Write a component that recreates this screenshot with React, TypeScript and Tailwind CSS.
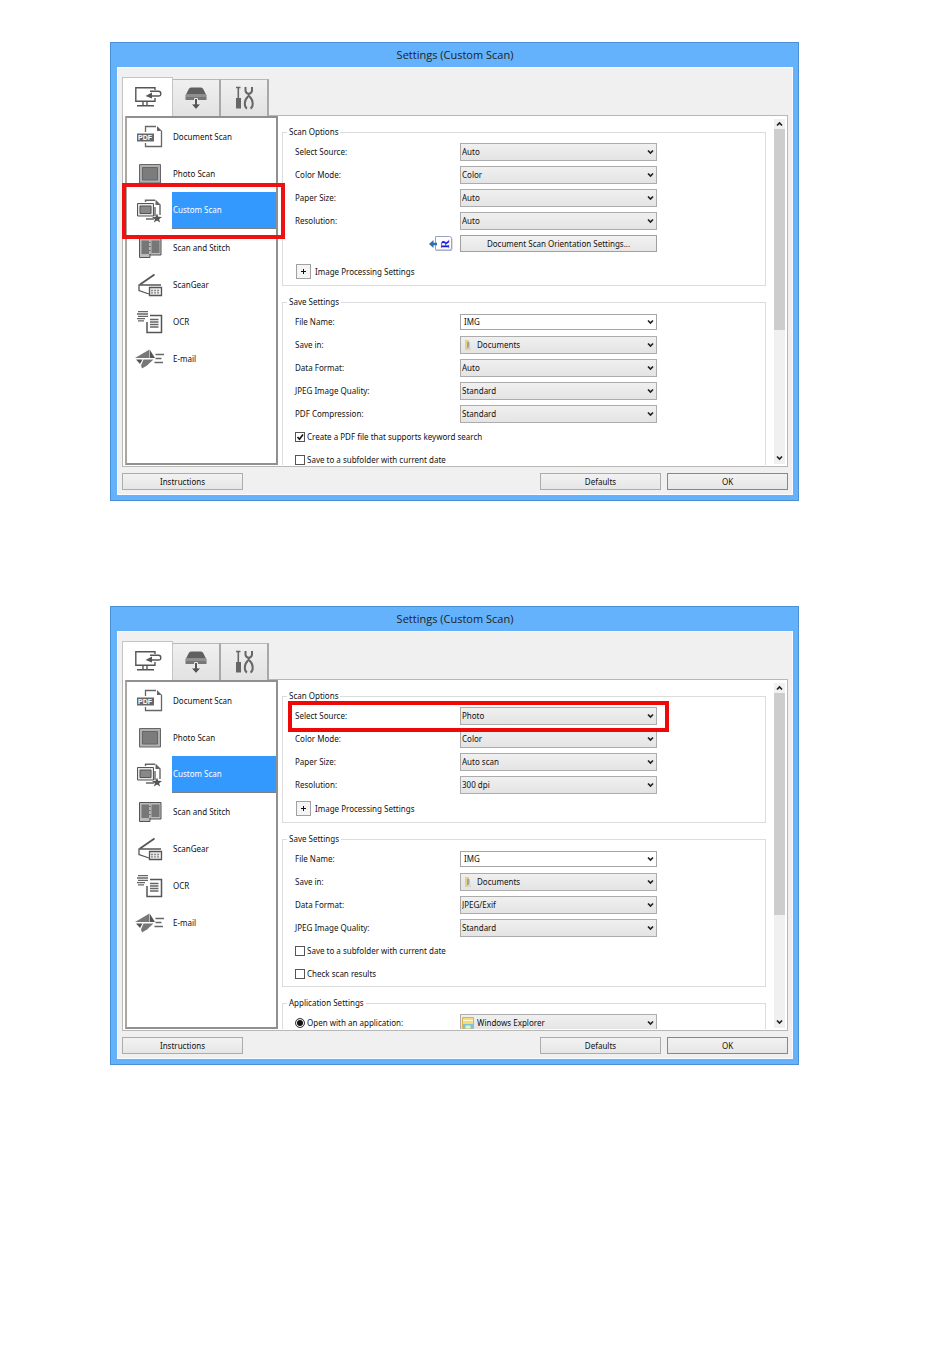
import React from 'react';
import clsx from 'clsx';

interface Option {
  id: string;
  label: string;
  value: string;
  icon?: React.ReactNode;
  editable?: boolean;
  highlighted?: boolean;
}

interface CheckOption {
  id: string;
  label: string;
  checked?: boolean;
}

const ComputerIcon: React.FC = () => (
  <svg width="28" height="22" viewBox="0 0 28 22" fill="none" stroke="#555" strokeWidth="1.4">
    <path d="M21 4V1.700H1.800v13.500H21V12" />
    <path d="M9 15v4M13 15v4M3 19.700h17" />
    <path d="M16 5.300h8.500q2.300 0 2.300 2.400T24.500 10H17" />
    <path d="M18 6.500v6l-6.500-2.500z" fill="#555" stroke="none" />
  </svg>
);

const ScannerIcon: React.FC = () => (
  <svg width="24" height="24" viewBox="0 0 24 24">
    <path d="M7 1.500h10q1.500 0 2.200 1.500L22 8.500H2L4.800 3Q5.500 1.500 7 1.500z" fill="#606060" />
    <path d="M1.500 8.500h21v5.500h-21z" fill="#777" />
    <path d="M2 10h20" stroke="#aaa" strokeWidth="1" />
    <path d="M10.500 12.500h3v5.500h3.500L12 23.500 7 18h3.500z" fill="#555" stroke="#eee" strokeWidth="1" />
  </svg>
);

const ToolsIcon: React.FC = () => (
  <svg width="20" height="24" viewBox="0 0 20 24" fill="none" stroke="#666" strokeWidth="1.6">
    <path d="M2 1.500h4.500M4.300 2v10" />
    <path d="M2 12h5v10.500H2z" fill="#666" stroke="none" />
    <path d="M11.500 1v3.500q0 2.500 3.200 3.500Q18 7 18 4.500V1" strokeWidth="2" />
    <path d="M14.700 8v3M14 10.500q-3.200 3-3.200 7t2.200 5M15.500 10.500q3.200 3 3.200 7t-2.200 5" strokeWidth="2" />
  </svg>
);

const PdfIcon: React.FC = () => (
  <svg width="28" height="24" viewBox="0 0 28 24" fill="none" stroke="#666" strokeWidth="1.3">
    <path d="M9.500 7V1.500H20M9.500 18v3.500h16V6" />
    <path d="M21 1l5 5h-5z" fill="#666" stroke="none" />
    <path d="M1 8.500h17v8H1z" fill="#666" stroke="none" />
    <text x="2" y="15" fontSize="7" fontWeight="bold" fontFamily="Liberation Sans, sans-serif" fill="#fff" stroke="none">PDF</text>
  </svg>
);

const PhotoIcon: React.FC = () => (
  <svg width="28" height="24" viewBox="0 0 28 24">
    <path d="M3.500 2.500h21v18.500h-21z" fill="#b0b0b0" stroke="#666" />
    <path d="M6.500 5.500h15v12.500h-15z" fill="#7c7c7c" stroke="#666" />
  </svg>
);

const CustomIcon: React.FC = () => (
  <svg width="28" height="24" viewBox="0 0 28 24">
    <path d="M9.500 3V1.200H19M24 6v10M10 20h8M19 8v9" stroke="#666" strokeWidth="1.400" fill="none" />
    <path d="M19.500 .5l5.500 5.500h-5.500z" fill="#666" />
    <path d="M1.500 4.500h16v12.500h-16z" fill="#e4e4e4" stroke="#555" />
    <path d="M4 7h11v7.500H4z" fill="#888" stroke="#555" />
    <path d="M21 14.500l1.300 3.300 3.700.2-2.900 2.200 1 3.300-3.100-2-3.100 2 1-3.300-2.900-2.200 3.700-.2z" fill="#555" />
  </svg>
);

const StitchIcon: React.FC = () => (
  <svg width="28" height="24" viewBox="0 0 28 24">
    <path d="M3.500 2.500h10.500v19H3.500z" fill="#bbb" stroke="#555" />
    <path d="M5.500 4.500h8v13.500h-8z" fill="#777" />
    <path d="M14 2.500h11v16.500H14z" fill="#bbb" stroke="#555" />
    <path d="M15.500 4.500h8v12.500h-8z" fill="#777" />
    <path d="M13.900 3v16" stroke="#eee" strokeDasharray="3 1" />
  </svg>
);

const ScanGearIcon: React.FC = () => (
  <svg width="28" height="24" viewBox="0 0 28 24" fill="none" stroke="#555" strokeWidth="1.300">
    <path d="M4 11.500L18.500 1.500" strokeWidth="1.800" />
    <path d="M25 12H3v5.500L13 21" />
    <path d="M13.500 14.500h12v8h-12z" fill="#eee" />
    <path d="M15 17.500h9M15 19.800h9" stroke="#888" strokeDasharray="2 1" />
  </svg>
);

const OcrIcon: React.FC = () => (
  <svg width="28" height="24" viewBox="0 0 28 24" fill="none" stroke="#666" strokeWidth="1.300">
    <path d="M2 1.700h10M1 4h11M2 6.300h10M1 8.600h8M2 10.900h6" />
    <path d="M14 5.500h11.500v17H11V12" stroke="#555" strokeWidth="1.500" />
    <path d="M14 9.500h8.500M14 12h8.500M14 14.500h8.500M14 17h8.500" />
  </svg>
);

const MailIcon: React.FC = () => (
  <svg width="30" height="20" viewBox="0 0 30 20">
    <path d="M0 9L14.500.500v8.500z" fill="#777" />
    <path d="M15 1l5 8h-5z" fill="#555" />
    <path d="M1 10.500h6.500L5 15z" fill="#555" />
    <path d="M8.500 10.500h10L12 16.500l-5 3-1-3z" fill="#777" />
    <path d="M20.500 5.500H29M20.500 9.500h6M19.500 13.500H28" stroke="#666" strokeWidth="1.400" />
  </svg>
);

const DocumentsIcon: React.FC = () => (
  <svg width="12" height="12" viewBox="0 0 12 12">
    <path d="M3 1h4v10H3z" fill="#e6cf86" />
    <path d="M5 3h2.500v6H5z" fill="#9aa7a8" />
    <path d="M7 7.500l2 1v3H6z" fill="#dcd9cf" />
  </svg>
);

const ExplorerIcon: React.FC = () => (
  <svg width="12" height="12" viewBox="0 0 12 12">
    <path d="M.5.500h11v11H.5z" fill="#f3dd78" stroke="#d8b24a" />
    <path d="M1 3.500h10" stroke="#fff8d0" />
    <path d="M1 7h10v4.500H1z" fill="#7fc3d8" />
    <path d="M3.500 8.500h5v3h-5z" fill="#e8f2c0" />
  </svg>
);

const OrientationIcon: React.FC = () => (
  <svg width="24" height="16" viewBox="0 0 24 16">
    <path d="M7.500 1.500h14q2 0 2 2v9.500q0 2-2 2h-14z" fill="#b9bfd0" />
    <path d="M6.500.500h14q2 0 2 2v9.500q0 2-2 2h-14z" fill="#fff" stroke="#9ba3bd" />
    <path d="M0 8l4.500-4v2.800H8v2.400H4.500V12z" fill="#2d6fb0" />
    <text x="-12.500" y="19.500" transform="rotate(-90)" fontSize="12" fontWeight="bold" fontFamily="Liberation Serif, serif" fill="#1a1ae0">R</text>
  </svg>
);

const Chevron: React.FC<{ up?: boolean }> = ({ up }) => (
  <svg width="7" height="6" viewBox="0 0 7 6" fill="none" stroke="#222" strokeWidth="1.700">
    <path d={up ? 'M1 4.500l2.500-2.500L6 4.500' : 'M1 1.500L3.500 4 6 1.500'} />
  </svg>
);

const tabs = [
  { name: 'Scanning from a Computer', icon: <ComputerIcon /> },
  { name: 'Scanning from the Operation Panel', icon: <ScannerIcon /> },
  { name: 'General Settings', icon: <ToolsIcon /> },
];

const scanTypes = [
  { label: 'Document Scan', icon: <PdfIcon /> },
  { label: 'Photo Scan', icon: <PhotoIcon /> },
  { label: 'Custom Scan', icon: <CustomIcon /> },
  { label: 'Scan and Stitch', icon: <StitchIcon /> },
  { label: 'ScanGear', icon: <ScanGearIcon /> },
  { label: 'OCR', icon: <OcrIcon /> },
  { label: 'E-mail', icon: <MailIcon /> },
];

const TabBar: React.FC = () => (
  <div className="flex h-[39px] items-end pl-1">
    {tabs.map((tab, index) => (
      <button
        key={tab.name}
        aria-label={tab.name}
        className={clsx(
          'flex items-center justify-center border-t border-r',
          index === 0
            ? 'relative z-10 h-[39px] w-[51px] border-l border-[#c4c4c4] bg-white'
            : 'h-[37px] w-12 border-t-[#b8b8b8] border-r-2 border-r-[#a8a8a8] bg-linear-to-b from-[#f0f0f0] to-[#e2e2e2]',
        )}
      >
        {tab.icon}
      </button>
    ))}
  </div>
);

const Sidebar: React.FC<{ highlighted?: boolean }> = ({ highlighted }) => (
  <ul className="mb-px ml-[2px] w-[153px] shrink-0 border-2 border-[#909090] border-l-[#a8a8a0] bg-white">
    {scanTypes.map(({ label, icon }) => {
      const selected = label === 'Custom Scan';
      return (
        <li key={label} className="relative">
          <button className="flex h-[37px] w-full items-center text-left">
            <span className="flex w-[45px] justify-center pl-px">{icon}</span>
            <span
              className={clsx(
                'flex h-full flex-1 items-center pl-px',
                selected && 'border-b border-[#7f7f7f] bg-[#3399ff] text-white',
              )}
            >
              {label}
            </span>
          </button>
          {selected && highlighted && (
            <span className="pointer-events-none absolute -top-[9px] -right-[9px] -bottom-[10px] -left-[5px] z-20 border-4 border-[#ee1111]" />
          )}
        </li>
      );
    })}
  </ul>
);

const OptionRow: React.FC<{ option: Option; prefix: string }> = ({ option, prefix }) => {
  const id = `${prefix}-${option.id}`;
  return (
    <div className="relative flex h-[23px] items-center">
      {option.id === 'application' ? (
        <label htmlFor={`${id}-radio`} className="flex w-[165px] items-center gap-[2px]">
          <input
            id={`${id}-radio`}
            type="radio"
            defaultChecked
            className="size-[10px] appearance-none rounded-full border border-[#444] bg-[#111] p-0 shadow-[inset_0_0_0_1px_#fff]"
          />
          {option.label}
        </label>
      ) : (
        <label htmlFor={id} className="w-[165px]">
          {option.label}
        </label>
      )}
      <div className="relative w-[197px]">
        {option.editable ? (
          <input
            id={id}
            defaultValue={option.value}
            className="block h-4 w-full border border-[#a6a6a6] bg-white px-[3px]"
          />
        ) : (
          <select
            id={id}
            aria-label={option.label}
            className={clsx(
              'block h-[18px] w-full appearance-none border border-[#acacac] bg-linear-to-b from-[#f0f0f0] to-[#e4e4e4]',
              option.icon ? 'pl-4' : 'pl-px',
            )}
          >
            <option>{option.value}</option>
          </select>
        )}
        {option.icon && (
          <span className="pointer-events-none absolute inset-y-0 left-[2px] flex items-center">{option.icon}</span>
        )}
        <span className="pointer-events-none absolute inset-y-0 right-[3px] flex items-center">
          <Chevron />
        </span>
      </div>
      {option.highlighted && (
        <span className="pointer-events-none absolute -top-[3px] -left-[7px] z-10 h-[31px] w-[381px] border-4 border-[#ee0808]" />
      )}
    </div>
  );
};

const CheckRow: React.FC<{ option: CheckOption; prefix: string }> = ({ option, prefix }) => (
  <label htmlFor={`${prefix}-${option.id}`} className="relative flex h-[23px] items-center gap-[2px]">
    <input
      id={`${prefix}-${option.id}`}
      type="checkbox"
      defaultChecked={option.checked}
      className="peer size-[10px] appearance-none border border-[#555] bg-white"
    />
    <svg
      className="pointer-events-none absolute left-px hidden peer-checked:block"
      width="8"
      height="8"
      viewBox="0 0 8 8"
      fill="none"
      stroke="#111"
      strokeWidth="1.600"
    >
      <path d="M1.500 4l2 2.200L7 1.500" />
    </svg>
    {option.label}
  </label>
);

const Group: React.FC<{ title: string; children: React.ReactNode }> = ({ title, children }) => (
  <fieldset className="mb-[10px] min-w-0 border border-[#dcdcdc] px-3 pt-[2px] pb-px">
    <legend className="-ml-2 h-3 px-[2px] leading-3">{title}</legend>
    {children}
  </fieldset>
);

const ImageProcessing: React.FC = () => (
  <div className="flex h-[25px] items-center gap-1">
    <button
      aria-label="Expand Image Processing Settings"
      className="ml-px flex size-[15px] items-center justify-center border border-[#a0a0a0] bg-[#f4f4f4]"
    >
      <svg width="5" height="5" viewBox="0 0 5 5" stroke="#111">
        <path d="M0 2.500h5M2.500 0v5" />
      </svg>
    </button>
    <span>Image Processing Settings</span>
  </div>
);

const Scrollbar: React.FC<{ thumb: string }> = ({ thumb }) => (
  <div className="mx-[2px] mt-[3px] mb-[2px] flex w-[11px] flex-col items-center bg-[#f0f0f0]">
    <span className="flex h-[10px] items-center">
      <Chevron up />
    </span>
    <div className={clsx('w-full bg-[#cdcdcd]', thumb)} />
    <span className="mt-auto flex h-3 items-center">
      <Chevron />
    </span>
  </div>
);

const DialogButton: React.FC<{ primary?: boolean; children: React.ReactNode }> = ({ primary, children }) => (
  <button
    className={clsx(
      'h-[17px] w-[121px] border bg-linear-to-b from-[#f2f2f2] to-[#e6e6e6]',
      primary ? 'border-[#3c9be8]' : 'border-[#acacac]',
    )}
  >
    {children}
  </button>
);

interface SettingsWindowProps {
  prefix: string;
  scanOptions: Option[];
  saveOptions: Option[];
  checks: CheckOption[];
  orientation?: boolean;
  sidebarHighlighted?: boolean;
  thumb: string;
  application?: Option;
}

const SettingsWindow: React.FC<SettingsWindowProps> = ({
  prefix,
  scanOptions,
  saveOptions,
  checks,
  orientation,
  sidebarHighlighted,
  thumb,
  application,
}) => (
  <section className="border border-[#4b8fd6] bg-[#63b2fb] pr-[5px] pb-[5px] pl-[6px] font-['Noto_Sans',sans-serif] text-[8px] leading-3 text-[#111]">
    <h2 className="h-6 text-center font-['Open_Sans',sans-serif] text-[11px] leading-6 text-[#222]">
      Settings (Custom Scan)
    </h2>
    <div className="border border-[#f8fbff] bg-[#f0f0f0] pt-[9px]">
      <TabBar />
      <div className="-mt-px mr-1 ml-1 flex h-[352px] border border-[#b8b8b8] bg-white">
        <Sidebar highlighted={sidebarHighlighted} />
        <div className="mb-px ml-1 min-w-0 flex-1 overflow-hidden pt-[10px]">
          <Group title="Scan Options">
            {scanOptions.map((option) => (
              <OptionRow key={option.id} option={option} prefix={prefix} />
            ))}
            {orientation && (
              <div className="mb-1 flex h-[23px] items-center">
                <div className="flex w-[165px] justify-end pr-[7px]">
                  <OrientationIcon />
                </div>
                <button className="h-[17px] w-[197px] border border-[#a0a0a0] bg-linear-to-b from-[#f2f2f2] to-[#e6e6e6]">
                  Document Scan Orientation Settings...
                </button>
              </div>
            )}
            <ImageProcessing />
          </Group>
          <Group title="Save Settings">
            {saveOptions.map((option) => (
              <OptionRow key={option.id} option={option} prefix={prefix} />
            ))}
            {checks.map((option) => (
              <CheckRow key={option.id} option={option} prefix={prefix} />
            ))}
          </Group>
          {application && (
            <Group title="Application Settings">
              <OptionRow option={application} prefix={prefix} />
            </Group>
          )}
        </div>
        <div className="ml-[6px] flex">
          <Scrollbar thumb={thumb} />
        </div>
      </div>
      <div className="flex gap-[6px] pt-[6px] pr-1 pb-1 pl-1">
        <DialogButton>Instructions</DialogButton>
        <span className="flex-1" />
        <DialogButton>Defaults</DialogButton>
        <DialogButton primary>OK</DialogButton>
      </div>
    </div>
  </section>
);

const App: React.FC = () => (
  <main className="flex min-h-screen flex-col gap-[105px] bg-white pt-[42px] pr-[151px] pb-10 pl-[110px]">
    <SettingsWindow
      prefix="auto"
      sidebarHighlighted
      orientation
      thumb="h-[201px]"
      scanOptions={[
        { id: 'source', label: 'Select Source:', value: 'Auto' },
        { id: 'color', label: 'Color Mode:', value: 'Color' },
        { id: 'paper', label: 'Paper Size:', value: 'Auto' },
        { id: 'resolution', label: 'Resolution:', value: 'Auto' },
      ]}
      saveOptions={[
        { id: 'file', label: 'File Name:', value: 'IMG', editable: true },
        { id: 'folder', label: 'Save in:', value: 'Documents', icon: <DocumentsIcon /> },
        { id: 'format', label: 'Data Format:', value: 'Auto' },
        { id: 'quality', label: 'JPEG Image Quality:', value: 'Standard' },
        { id: 'compression', label: 'PDF Compression:', value: 'Standard' },
      ]}
      checks={[
        { id: 'keyword', label: 'Create a PDF file that supports keyword search', checked: true },
        { id: 'subfolder', label: 'Save to a subfolder with current date' },
      ]}
    />
    <SettingsWindow
      prefix="photo"
      thumb="h-[222px]"
      scanOptions={[
        { id: 'source', label: 'Select Source:', value: 'Photo', highlighted: true },
        { id: 'color', label: 'Color Mode:', value: 'Color' },
        { id: 'paper', label: 'Paper Size:', value: 'Auto scan' },
        { id: 'resolution', label: 'Resolution:', value: '300 dpi' },
      ]}
      saveOptions={[
        { id: 'file', label: 'File Name:', value: 'IMG', editable: true },
        { id: 'folder', label: 'Save in:', value: 'Documents', icon: <DocumentsIcon /> },
        { id: 'format', label: 'Data Format:', value: 'JPEG/Exif' },
        { id: 'quality', label: 'JPEG Image Quality:', value: 'Standard' },
      ]}
      checks={[
        { id: 'subfolder', label: 'Save to a subfolder with current date' },
        { id: 'results', label: 'Check scan results' },
      ]}
      application={{ id: 'application', label: 'Open with an application:', value: 'Windows Explorer', icon: <ExplorerIcon /> }}
    />
  </main>
);

export default App;
